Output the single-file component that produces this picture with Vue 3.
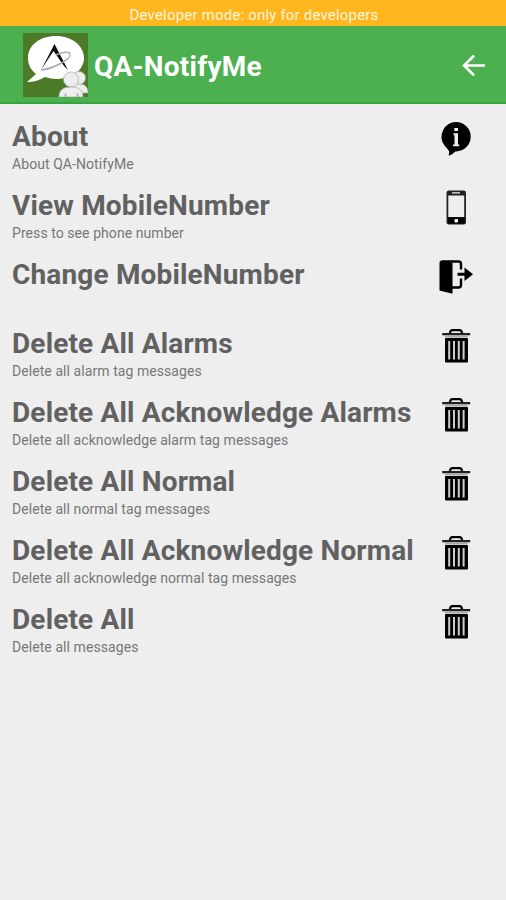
<script setup>
const items = [
  { title: 'About', note: 'About QA-NotifyMe', icon: 'info' },
  { title: 'View MobileNumber', note: 'Press to see phone number', icon: 'phone' },
  { title: 'Change MobileNumber', note: '', icon: 'exit' },
  { title: 'Delete All Alarms', note: 'Delete all alarm tag messages', icon: 'trash' },
  { title: 'Delete All Acknowledge Alarms', note: 'Delete all acknowledge alarm tag messages', icon: 'trash' },
  { title: 'Delete All Normal', note: 'Delete all normal tag messages', icon: 'trash' },
  { title: 'Delete All Acknowledge Normal', note: 'Delete all acknowledge normal tag messages', icon: 'trash' },
  { title: 'Delete All', note: 'Delete all messages', icon: 'trash' },
]
</script>

<template>
  <div class="screen">
    <div class="banner">Developer mode: only for developers</div>
    <header class="bar">
      <svg class="logo" viewBox="0 0 65 64">
        <rect width="65" height="64" fill="#4c7a27" />
        <path d="M33 3C17 3 5 12 5 25c0 7 3 12 8 16L4 49c7 0 13-2 18-5 4 1 7 2 11 2 16 0 28-9 28-21S49 3 33 3Z" fill="#fff" />
        <path d="M18 37 31.500 11 45 37 41 33 30.500 18Z" fill="#111" />
        <path d="M18 37C27 36 49 27 47 21c-1-3-8-2-14 1M18 37c6 0 20-5 26-11" fill="none" stroke="#aaa" stroke-width="1.400" />
        <g fill="#eee" stroke="#aaa" stroke-width=".7">
          <circle cx="56" cy="45" r="6.500" />
          <path d="M47 60c0-6 3-9 9-9s9 3 9 9Z" />
          <circle cx="48" cy="46.500" r="7.500" />
          <path d="M36 64c0-7 4-10 12-10s12 3 12 10Z" />
        </g>
        <path d="M41 63.500c0-2 1-3 2-4l1 4.500ZM53 64l1-4.500c1.500 1 2 2 2 4.500Z" fill="#bbb" />
      </svg>
      <h1 class="name">QA-NotifyMe</h1>
      <svg class="back" viewBox="0 0 24 24">
        <path d="M12.500 2.500 3 12l9.500 9.500M3 12h20" fill="none" stroke="#fff" stroke-width="2.600" />
      </svg>
    </header>
    <main class="list">
      <section v-for="item in items" :key="item.title" class="row">
        <div class="copy">
          <h2 class="title">{{ item.title }}</h2>
          <p class="note">{{ item.note }}</p>
        </div>
        <svg class="icon" viewBox="0 0 40 40">
          <g v-if="item.icon === 'info'">
            <path d="M20 2a14.700 14.700 0 0 0-11.500 23.500c2 2.500 4 4 4.500 5.700.3 1.500.2 2.500-.5 4.200 3.500-.5 4.500-2.500 7-4h.5a14.700 14.700 0 0 0 0-29.400Z" />
            <path d="M18.300 8h3.700v3h-3.700ZM17.500 13.200h4.500v11.300h1.300v1.800h-6.300v-1.800h1.500v-9.300h-1Z" fill="#eee" />
          </g>
          <g v-else-if="item.icon === 'phone'">
            <rect x="10.500" y="1.500" width="19.500" height="34" rx="2.200" fill="#222" />
            <rect x="12.300" y="6.500" width="15.900" height="21.500" fill="#eee" />
            <path d="M16 3h8v1.700h-8Z" fill="#bbb" />
            <path d="M12 28.500h16.500v6H12Z" />
            <rect x="18.500" y="30" width="3.500" height="3.500" rx="1" fill="#fff" />
          </g>
          <g v-else-if="item.icon === 'exit'">
            <path d="M3.500 4.500C3.500 3.200 4.500 2.500 6 2.500L16.500 5v30.700L3.500 32.500Z" />
            <path d="M6 3.500h16.500q2.500 0 2.500 2.500v5.500M16 29.500h6.500q2.500 0 2.500-2.500v-6.500" fill="none" stroke="#000" stroke-width="2.400" />
            <path d="M21.500 14.800h7V9.500l8.500 6.700-8.500 6.700v-5.200h-7Z" />
          </g>
          <g v-else>
            <path d="M13.800 6.500Q14.300 3.100 16.500 3.100h7q2.200 0 2.700 3.400" fill="none" stroke="#000" stroke-width="2.200" />
            <path d="M6.200 6h28v2.300h-28Z" fill="#222" />
            <rect x="9" y="11" width="23" height="24.500" rx="1" />
            <path d="M13.200 14v18.500M18 14v18.500M22.800 14v18.500M27.600 14v18.500" fill="none" stroke="#ccc" stroke-width="2" />
            <path d="M9 8.500h22.500v2H9Z" fill="#aaa" />
          </g>
        </svg>
      </section>
    </main>
  </div>
</template>

<style>
body { margin: 0; background: #eee; }
</style>
<style scoped>
.screen { min-height: 900px; background: #eee; font-family: Roboto, sans-serif; }
.banner { height: 26px; padding: 2px 0 0 2px; box-sizing: border-box; background: #ffb61f; color: #fff5dc; text-align: center; font-size: 15px; letter-spacing: .19px; line-height: 26px; }
.bar { height: 78px; box-sizing: border-box; padding: 0 20px 0 23px; display: flex; align-items: center; background: #4caf50; border-bottom: 2px solid #36a541; }
.logo { width: 65px; height: 64px; margin: 2px 6px 0 0; flex: none; }
.name { margin: 5px 0 0; font-size: 28px; letter-spacing: .22px; line-height: 34px; font-weight: 700; color: #fff; }
.back { width: 25px; height: 25px; margin: 2px 0 0 auto; }
.list { padding-top: 16px; }
.row { height: 69px; padding: 0 30px 0 12px; display: flex; justify-content: space-between; }
.copy { white-space: nowrap; color: #616161; }
.title { margin: 0; font-size: 28px; letter-spacing: .16px; line-height: 33px; font-weight: 700; }
.note { margin: 3px 0 0; font-size: 14px; letter-spacing: .07px; line-height: 17px; color: #777; }
.icon { width: 40px; height: 40px; flex: none; }
</style>
